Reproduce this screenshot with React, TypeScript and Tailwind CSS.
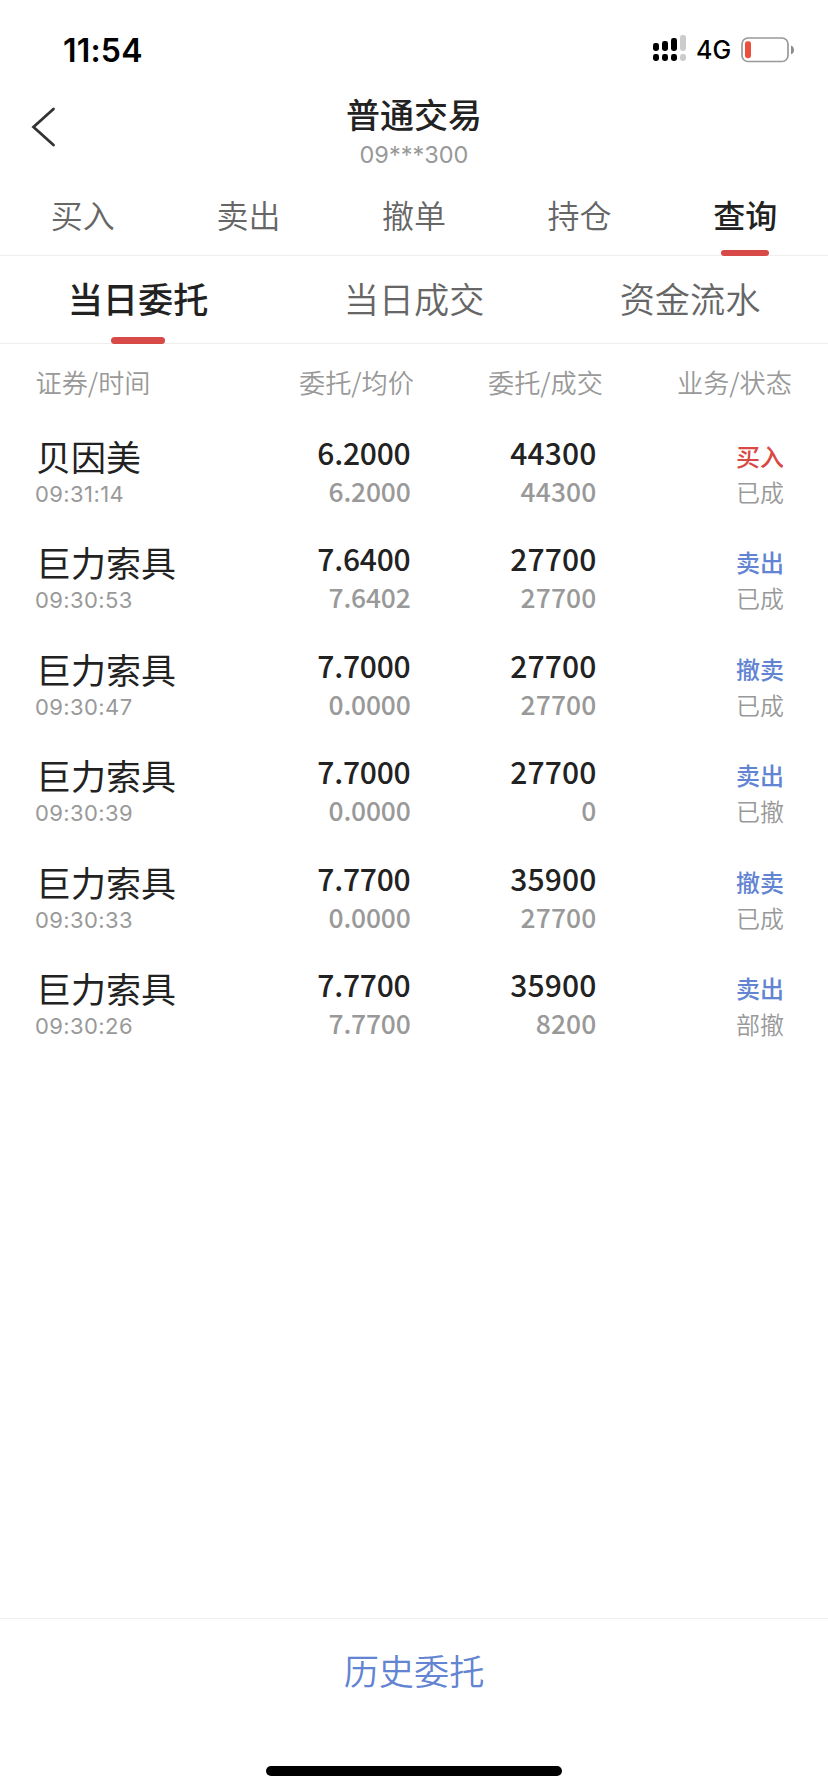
const cjk = "font-['Noto_Sans_CJK_SC',sans-serif]";

const tabs = ["买入", "卖出", "撤单", "持仓", "查询"];
const subTabs = ["当日委托", "当日成交", "资金流水"];

type Order = {
  name: string;
  time: string;
  price: string;
  avg: string;
  qty: string;
  filled: string;
  side: string;
  status: string;
};

const orders: Order[] = [
  { name: "贝因美", time: "09:31:14", price: "6.2000", avg: "6.2000", qty: "44300", filled: "44300", side: "买入", status: "已成" },
  { name: "巨力索具", time: "09:30:53", price: "7.6400", avg: "7.6402", qty: "27700", filled: "27700", side: "卖出", status: "已成" },
  { name: "巨力索具", time: "09:30:47", price: "7.7000", avg: "0.0000", qty: "27700", filled: "27700", side: "撤卖", status: "已成" },
  { name: "巨力索具", time: "09:30:39", price: "7.7000", avg: "0.0000", qty: "27700", filled: "0", side: "卖出", status: "已撤" },
  { name: "巨力索具", time: "09:30:33", price: "7.7700", avg: "0.0000", qty: "35900", filled: "27700", side: "撤卖", status: "已成" },
  { name: "巨力索具", time: "09:30:26", price: "7.7700", avg: "7.7700", qty: "35900", filled: "8200", side: "卖出", status: "部撤" },
];

function SignalIcon() {
  return (
    <svg className="h-[26px] w-[33px]" viewBox="0 0 33 26">
      <rect x="0" y="8" width="6" height="8" rx="2.4" />
      <rect x="9" y="6" width="6" height="10" rx="2.4" />
      <rect x="18" y="3" width="6" height="13" rx="2.4" />
      <rect x="27" y="0" width="6" height="16" rx="2.4" fill="#ccc" />
      <rect x="0" y="19" width="6" height="7" rx="2.4" />
      <rect x="9" y="19" width="6" height="7" rx="2.4" />
      <rect x="18" y="19" width="6" height="7" rx="2.4" />
      <rect x="27" y="19" width="6" height="7" rx="2.4" fill="#ccc" />
    </svg>
  );
}

function BatteryIcon() {
  return (
    <svg className="h-[26px] w-[54px]" viewBox="0 0 54 26">
      <rect x="1" y="1" width="46" height="23.5" rx="6" fill="none" stroke="#999" strokeWidth="1.7" />
      <rect x="4" y="4.2" width="6" height="17" rx="2.4" fill="#ea4e3d" />
      <path d="M50 8.5c2 .8 3 2.4 3 4.4s-1 3.6-3 4.4z" fill="#8c8c8c" />
    </svg>
  );
}

function Amounts({ main, sub, spacing }: { main: string; sub: string; spacing: string }) {
  return (
    <div className={`flex flex-col items-end font-medium ${spacing}`}>
      <span className="h-[31px] text-[30px] leading-[31px] text-[#222]">{main}</span>
      <span className="h-[45px] text-[26.4px] leading-[45px] text-[#999]">{sub}</span>
    </div>
  );
}

function OrderRow({ order }: { order: Order }) {
  const sideColor = order.side === "买入" ? "text-[#d94844]" : "text-[#6284d2]";
  return (
    <li className="grid h-[106.4px] grid-cols-[200px_210.5px_186px_1fr] pr-[44px]">
      <div className="flex flex-col pl-[35px]">
        <span className="h-[38px] pl-px text-[35px] leading-[38px] text-[#222]">{order.name}</span>
        <span className="h-[39px] font-[Inter] text-[22px] leading-[39px] tracking-[0.4px] text-[#999]">{order.time}</span>
      </div>
      <Amounts main={order.price} sub={order.avg} spacing="tracking-[-0.2px]" />
      <Amounts main={order.qty} sub={order.filled} spacing="tracking-[0.15px]" />
      <div className="flex flex-col items-end text-[24px]">
        <span className={`h-[38px] leading-[38px] font-medium ${sideColor}`}>{order.side}</span>
        <span className="h-[34px] leading-[34px] font-[350] text-[#999]">{order.status}</span>
      </div>
    </li>
  );
}

export default function App() {
  return (
    <div className={`flex h-[1792px] w-[828px] flex-col bg-white ${cjk}`}>
      <div className="flex h-[88px] items-start justify-between pt-[35px] pr-[33px] pl-[63px] font-[Inter]">
        <span className="text-[32px] leading-[31px] font-semibold tracking-[0.2px]">11:54</span>
        <div className="flex items-start">
          <SignalIcon />
          <span className="ml-[10px] w-[45px] text-[25px] leading-[30px] font-medium">4G</span>
          <div className="pt-[2px]"><BatteryIcon /></div>
        </div>
      </div>

      <header className="grid h-[88px] grid-cols-[1fr_auto_1fr]">
        <svg className="mt-[18px] ml-[30px] h-[42px] w-[28px]" viewBox="0 0 28 42" fill="none" stroke="#333" strokeWidth="2.8" strokeLinecap="round">
          <path d="M23.5 3 3.500 21 23.500 39" />
        </svg>
        <div className="flex flex-col items-center">
          <h1 className="h-[52px] text-[34px] leading-[52px] font-medium text-[#222]">普通交易</h1>
          <span className="h-[30px] font-[Inter] text-[23.5px] leading-[30px] text-[#999]">09***300</span>
        </div>
      </header>

      <nav className="grid h-20 grid-cols-5 border-b border-[#eee]">
        {tabs.map((t, i) => (
          <div key={t} className="relative flex justify-center">
            <span className={`text-[32px] leading-[77px] ${i === 4 ? "font-medium text-[#222]" : "font-[350] text-[#666]"}`}>{t}</span>
            {i === 4 && <i className="absolute -bottom-px left-[59px] h-[6px] w-12 rounded-[3px] bg-[#d74a47]" />}
          </div>
        ))}
      </nav>

      <nav className="grid h-[88px] grid-cols-3 border-b border-[#eee]">
        {subTabs.map((t, i) => (
          <div key={t} className="relative flex justify-center">
            <span className={`text-[35.200px] leading-[84px] ${i === 0 ? "font-medium text-[#222]" : "font-[350] text-[#666]"}`}>{t}</span>
            {i === 0 && <i className="absolute -bottom-px left-[111px] h-[7px] w-[54px] rounded-[3.5px] bg-[#d74a47]" />}
          </div>
        ))}
      </nav>

      <div className="grid h-[93px] grid-cols-[200px_214px_189px_1fr] pr-9 text-[26.200px] leading-[77px] font-[350] text-[#999]">
        <span className="pl-[35.5px]">证券/时间</span>
        <span className="text-right">委托/均价</span>
        <span className="text-right">委托/成交</span>
        <span className="text-right">业务/状态</span>
      </div>

      <ul className="flex-1">
        {orders.map((o) => (
          <OrderRow key={o.time} order={o} />
        ))}
      </ul>

      <footer className="flex h-[174px] flex-col items-center justify-between border-t border-[#eee] pb-4">
        <button className="text-[35.200px] leading-[101px] font-[350] text-[#6284d2]">历史委托</button>
        <span className="h-[10px] w-[296px] rounded-full bg-black" />
      </footer>
    </div>
  );
}
